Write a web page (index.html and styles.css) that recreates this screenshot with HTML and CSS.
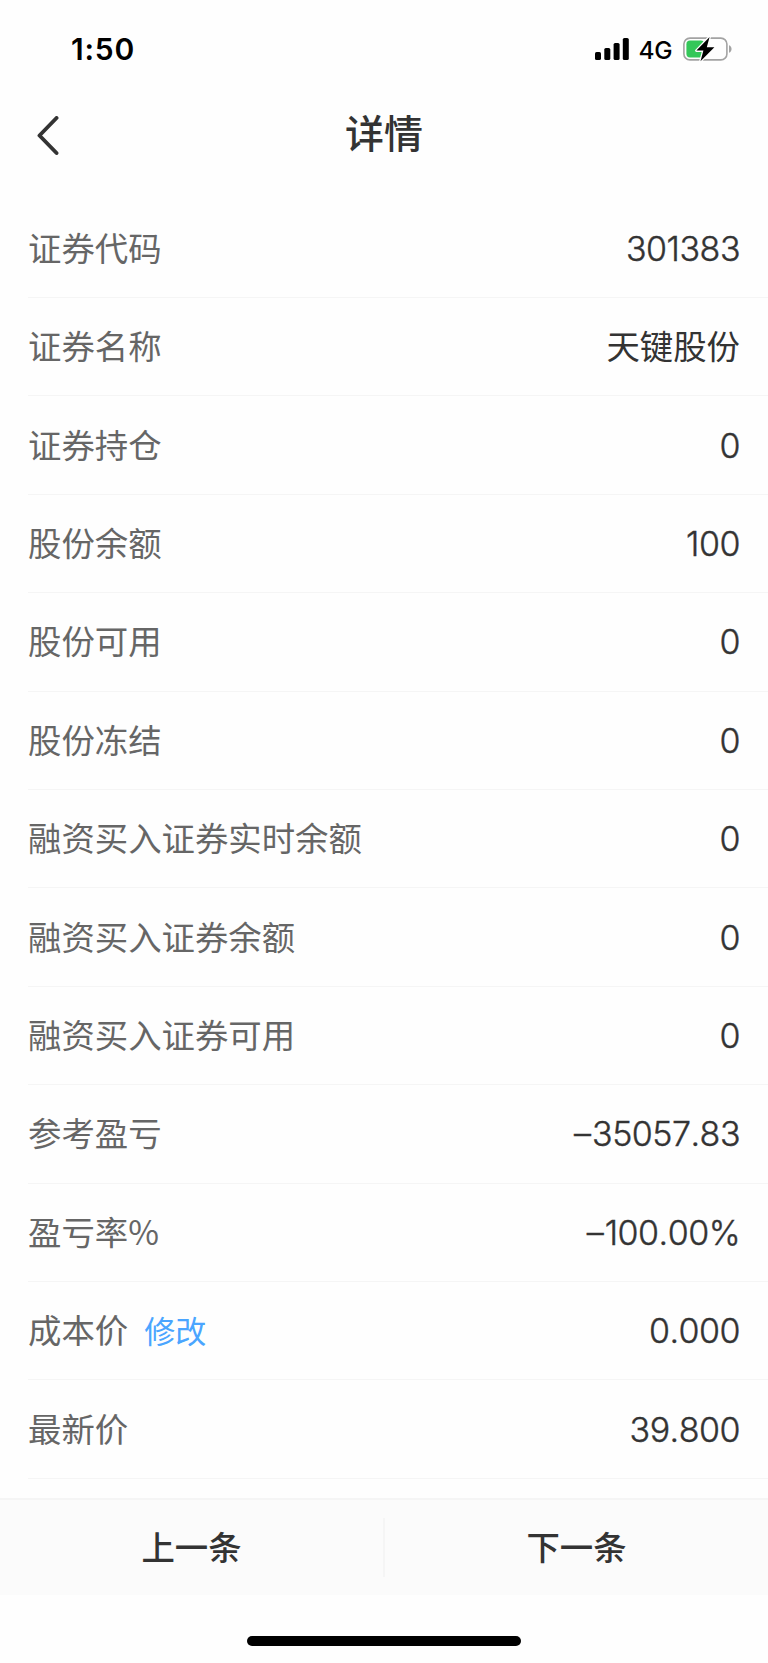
FILE: index.html
```
<!DOCTYPE html>
<html lang="zh-CN">
<head>
    <meta charset="UTF-8">
    <title>详情</title>
    <link rel="stylesheet" href="styles.css">
</head>
<body>
    <div class="status-bar">
        <div class="time">1:50</div>
        <div class="status-icons">
            <svg class="signal" width="34" height="24" viewBox="0 0 34 24">
                <rect x="0" y="15" width="6" height="8" rx="1.6"/>
                <rect x="9.3" y="11" width="6" height="12" rx="1.6"/>
                <rect x="18.6" y="6" width="6" height="17" rx="1.6"/>
                <rect x="27.8" y="1" width="6" height="22" rx="1.6"/>
            </svg>
            <span class="network">4G</span>
            <svg class="battery" width="50" height="26" viewBox="0 0 50 26">
                <rect x="0.9" y="2.1" width="43" height="21.8" rx="6" fill="none" stroke="#a3a3a3" stroke-width="1.6"/>
                <path d="M46 9.2c3.4 1.2 3.4 6.4 0 7.6z" fill="#a3a3a3"/>
                <rect x="3.4" y="4.6" width="18" height="16.8" rx="3.6" fill="#34c759"/>
                <path d="M26.6 1L13.4 14.6h7l-2.9 10.6L31.4 11.2h-7.6z" fill="#000" stroke="#fff" stroke-width="2.6" stroke-linejoin="round" paint-order="stroke"/>
            </svg>
        </div>
    </div>
    <div class="nav">
        <svg class="back" width="24" height="40" viewBox="0 0 24 40">
            <path d="M19.5 2L2.5 19.5L19.5 37" fill="none" stroke="#333" stroke-width="3.9" stroke-linecap="round" stroke-linejoin="round"/>
        </svg>
        <div class="title">详情</div>
    </div>
    <div class="list">
        <div class="row"><span class="label">证券代码</span><span class="value">301383</span></div>
        <div class="row"><span class="label">证券名称</span><span class="value name">天键股份</span></div>
        <div class="row"><span class="label">证券持仓</span><span class="value">0</span></div>
        <div class="row"><span class="label">股份余额</span><span class="value">100</span></div>
        <div class="row"><span class="label">股份可用</span><span class="value">0</span></div>
        <div class="row"><span class="label">股份冻结</span><span class="value">0</span></div>
        <div class="row"><span class="label">融资买入证券实时余额</span><span class="value">0</span></div>
        <div class="row"><span class="label">融资买入证券余额</span><span class="value">0</span></div>
        <div class="row"><span class="label">融资买入证券可用</span><span class="value">0</span></div>
        <div class="row"><span class="label">参考盈亏</span><span class="value"><span class="sign">–</span>35057.83</span></div>
        <div class="row"><span class="label">盈亏率%</span><span class="value"><span class="sign">–</span>100.00%</span></div>
        <div class="row"><span class="label">成本价<a class="edit">修改</a></span><span class="value">0.000</span></div>
        <div class="row"><span class="label">最新价</span><span class="value">39.800</span></div>
    </div>
    <div class="footer">
        <div class="footer-button">上一条</div>
        <div class="divider"></div>
        <div class="footer-button">下一条</div>
    </div>
    <div class="home-indicator"></div>
</body>
</html>
```
FILE: styles.css
```
* {
    box-sizing: border-box;
}
body {
    margin: 0;
    width: 768px;
    height: 1663px;
    display: flex;
    flex-direction: column;
    background: #fefefe;
    color: #333;
    font-family: "Noto Sans CJK SC", sans-serif;
    overflow: hidden;
}
.status-bar {
    height: 98px;
    padding: 0 35px 0 71px;
    display: flex;
    align-items: center;
    justify-content: space-between;
    color: #000;
    font-family: Inter, sans-serif;
}
.time {
    font-size: 30px;
    font-weight: 600;
    letter-spacing: 0.8px;
}
.status-icons {
    display: flex;
    align-items: center;
}
.network {
    margin: 0 11px 0 10px;
    padding-top: 2px;
    font-size: 24.5px;
    font-weight: 500;
    letter-spacing: -0.5px;
}
.nav {
    height: 101.5px;
    padding: 0 37px;
    display: grid;
    grid-template-columns: 1fr auto 1fr;
    align-items: start;
}
.back {
    margin-top: 18px;
}
.title {
    margin-top: 5px;
    font-size: 39px;
    line-height: 56px;
    font-weight: 500;
}
.list {
    height: 1298.5px;
}
.row {
    height: 98.42px;
    margin-left: 28px;
    padding-right: 28px;
    display: flex;
    align-items: center;
    justify-content: space-between;
    border-bottom: 1px solid #f5f5f5;
    font-size: 33.4px;
}
.label {
    padding-bottom: 4px;
    color: #666;
}
.edit {
    margin-left: 16px;
    color: #4aa5ff;
    font-size: 31px;
}
.value {
    font-family: Inter, sans-serif;
    font-size: 34px;
    font-weight: 300;
    font-kerning: none;
    letter-spacing: -0.5px;
    -webkit-text-stroke: 0.4px #333;
}
.sign {
    margin-right: 1.5px;
}
.name {
    padding-bottom: 4px;
    font-family: "Noto Sans CJK SC", sans-serif;
    font-size: 33.4px;
    font-weight: 400;
    letter-spacing: 0;
    -webkit-text-stroke: 0;
}
.footer {
    height: 97px;
    display: flex;
    align-items: center;
    border-top: 2px solid #f5f5f5;
    background: #fbfbfb;
}
.footer-button {
    flex: 1;
    padding-bottom: 5px;
    text-align: center;
    font-size: 33.4px;
    font-weight: 500;
}
.divider {
    width: 2px;
    height: 59px;
    background: #f5f5f5;
}
.home-indicator {
    width: 274px;
    height: 10px;
    margin: 41px auto 0;
    border-radius: 5px;
    background: #000;
}
```
